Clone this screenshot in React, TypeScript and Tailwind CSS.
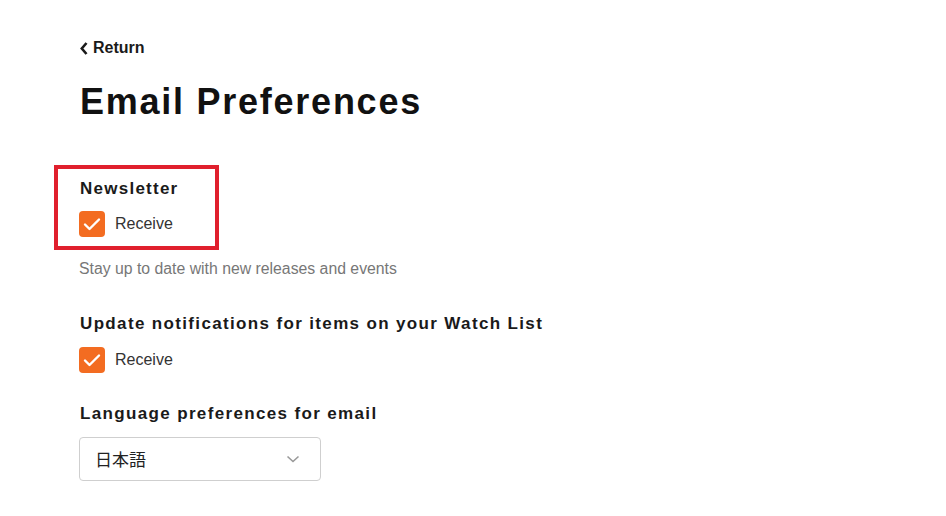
import { useState } from 'react';

function Checkbox({ checked, onChange }: { checked: boolean; onChange: () => void }) {
    return (
        <button
            type="button"
            onClick={onChange}
            className={`flex h-[26px] w-[26px] items-center justify-center rounded-[4px] ${checked ? 'bg-[#f36c21]' : 'border border-[#bbb] bg-white'}`}
        >
            {checked && (
                <svg width="26" height="26" viewBox="0 0 26 26" fill="none">
                    <polyline points="6,13.5 10.5,18 20,8.5" stroke="#fff" strokeWidth="2.4" strokeLinecap="round" strokeLinejoin="round" />
                </svg>
            )}
        </button>
    );
}

function ReceiveRow({ checked, onChange }: { checked: boolean; onChange: () => void }) {
    return (
        <label className="flex items-center gap-[10px]">
            <Checkbox checked={checked} onChange={onChange} />
            <span className="text-[16px] leading-6 text-[#333]">Receive</span>
        </label>
    );
}

export default function App() {
    const [newsletter, setNewsletter] = useState(true);
    const [watchList, setWatchList] = useState(true);

    return (
        <div className="min-h-screen bg-white pl-[79px] pt-9 font-['Liberation_Sans',Arial,sans-serif] text-[#1a1a1a]">
            <a href="#" className="flex w-fit items-center gap-[5px] pl-px text-[16px] font-bold leading-6">
                <svg width="8" height="13" viewBox="0 0 8 13" fill="none">
                    <polyline points="6.5,1 1.8,6.5 6.5,12" stroke="#1a1a1a" strokeWidth="2.6" />
                </svg>
                Return
            </a>

            <h1 className="mt-[20px] pl-px text-[36px] font-bold leading-[44px] tracking-[1.75px] text-[#111]">Email Preferences</h1>

            <div className="-ml-[25px] mt-[41px] w-[165px] border-4 border-[#e01f2d] pb-[9px] pl-[21px] pt-[8px]">
                <h2 className="pl-px text-[17px] font-bold leading-6 tracking-[1.25px]">Newsletter</h2>
                <div className="mt-[10px]">
                    <ReceiveRow checked={newsletter} onChange={() => setNewsletter(!newsletter)} />
                </div>
            </div>
            <p className="mt-[7px] text-[15.8px] leading-6 text-[#777]">Stay up to date with new releases and events</p>

            <h2 className="mt-[31px] pl-px text-[17px] font-bold leading-6 tracking-[1.35px]">Update notifications for items on your Watch List</h2>
            <div className="mt-[11px]">
                <ReceiveRow checked={watchList} onChange={() => setWatchList(!watchList)} />
            </div>

            <h2 className="mt-[29px] pl-px text-[17px] font-bold leading-6 tracking-[1.35px]">Language preferences for email</h2>
            <div className="mt-[11px] flex h-[44px] w-[242px] items-center justify-between rounded-[4px] border border-[#cfcfcf] pl-[15px] pr-[20px]">
                <span className="font-['Noto_Sans_CJK_JP',sans-serif] text-[17px] text-[#222]">日本語</span>
                <svg width="14" height="8" viewBox="0 0 14 8" fill="none">
                    <polyline points="1.5,1.5 7,6.5 12.5,1.5" stroke="#999" strokeWidth="1.6" />
                </svg>
            </div>
        </div>
    );
}
